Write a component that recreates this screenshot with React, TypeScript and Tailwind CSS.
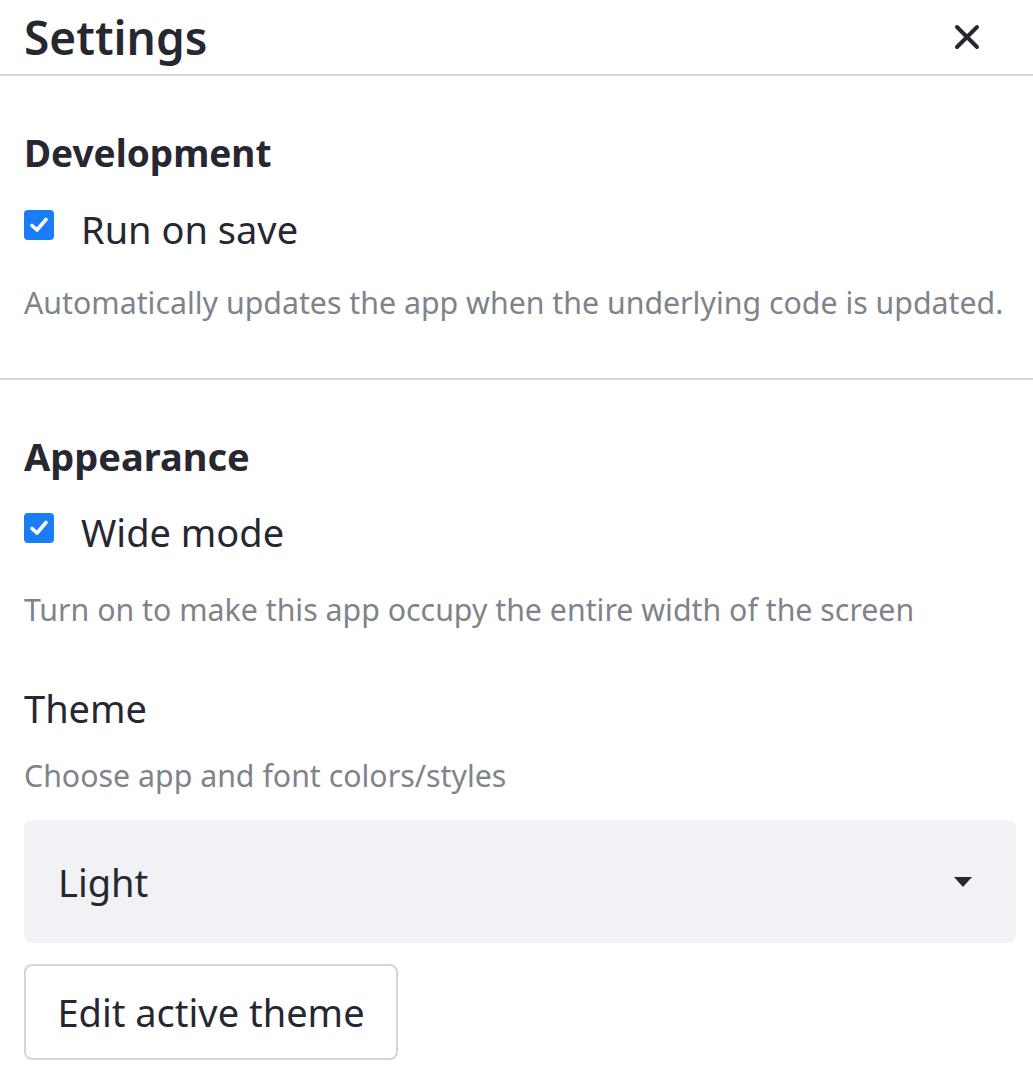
import type { ReactNode } from "react";

function CheckRow({ label }: { label: string }) {
  return (
    <div className="flex items-start h-12">
      <div className="mt-[5px] w-[30px] h-[30px] rounded-[4px] bg-[#1a7df5] flex items-center justify-center shrink-0">
        <svg width="22" height="22" viewBox="0 0 22 22" fill="none">
          <path d="M4 11.5 L9 16 L18 5.5" stroke="white" strokeWidth="3.6" strokeLinecap="round" strokeLinejoin="round" />
        </svg>
      </div>
      <span className="ml-[27px] text-[38px] leading-[48px]">{label}</span>
    </div>
  );
}

function Help({ children, className = "" }: { children: ReactNode; className?: string }) {
  return <p className={"h-10 text-[30.3px] leading-[40px] text-[#808389] whitespace-nowrap " + className}>{children}</p>;
}

export default function App() {
  return (
    <div className="w-[1033px] h-[1073px] overflow-hidden bg-white text-[#262730] font-['Noto_Sans','Open_Sans',sans-serif]">
      {/* Header */}
      <div className="h-[76px] flex items-center justify-between pl-6 pr-[53px] border-b-2 border-[#d5d5d8]">
        <h1 className="text-[46px] leading-[56px] font-semibold">Settings</h1>
        <svg width="26" height="26" viewBox="0 0 26 26" fill="none">
          <path d="M3 3 L23 23 M23 3 L3 23" stroke="#262730" strokeWidth="4" strokeLinecap="round" />
        </svg>
      </div>

      <div className="px-6 flex flex-col">
        {/* Development */}
        <h2 className="mt-[53px] h-12 text-[37px] leading-[48px] font-bold">Development</h2>
        <div className="mt-[28px]">
          <CheckRow label="Run on save" />
        </div>
        <Help className="mt-[30px]">Automatically updates the app when the underlying code is updated.</Help>
      </div>

      <div className="mt-[55px] h-[2px] bg-[#d5d5d8]" />

      <div className="pl-6 pr-[17px] flex flex-col">
        {/* Appearance */}
        <h2 className="mt-[52px] h-12 text-[38px] leading-[48px] font-bold">Appearance</h2>
        <div className="mt-[28px]">
          <CheckRow label="Wide mode" />
        </div>
        <Help className="mt-[34px]">Turn on to make this app occupy the entire width of the screen</Help>

        <div className="mt-[54px] h-12 text-[38px] leading-[48px]">Theme</div>
        <Help className="mt-[24px]">Choose app and font colors/styles</Help>

        <div className="mt-[24px] h-[123px] rounded-[8px] bg-[#f0f2f6] flex items-center justify-between pl-[34px] pr-[44px]">
          <span className="text-[38px] leading-[48px]">Light</span>
          <svg width="18" height="10" viewBox="0 0 18 10">
            <path d="M0 0 H18 L9 10 Z" fill="#262730" />
          </svg>
        </div>

        <button className="mt-[21px] w-[374px] h-[96px] rounded-[8px] border-2 border-[#d5d5d8] bg-white text-[38px] leading-[48px] text-[#262730]">
          Edit active theme
        </button>
      </div>
    </div>
  );
}
